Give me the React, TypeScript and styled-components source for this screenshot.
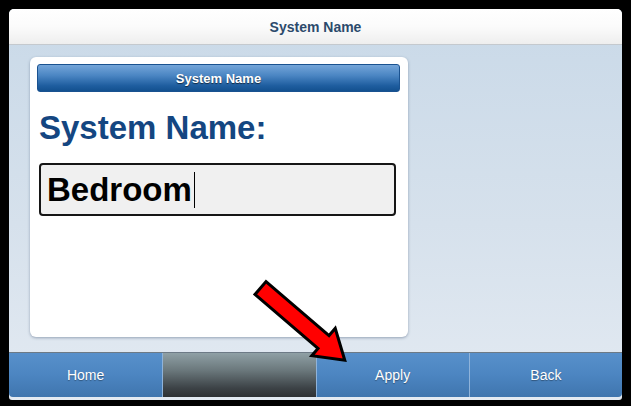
import React from "react";
import styled, { createGlobalStyle } from "styled-components";

const Global = createGlobalStyle`
  html, body { margin: 0; padding: 0; background: #000; }
  body { width: 631px; height: 406px; overflow: hidden; font-family: "Liberation Sans", Arial, sans-serif; }
`;

const Frame = styled.div`
  position: relative;
  width: 631px;
  height: 406px;
  background: #000;
  padding: 9px 9px 6px 9px;
  box-sizing: border-box;
`;

const Screen = styled.div`
  width: 613px;
  height: 391px;
  display: flex;
  flex-direction: column;
  border-radius: 5px 5px 3px 3px;
  overflow: hidden;
  background: linear-gradient(to bottom, #c9d9e8 0%, #d6e1ec 55%, #e3eaf2 100%);
`;

const Header = styled.div`
  height: 35px;
  flex: none;
  display: flex;
  align-items: center;
  justify-content: center;
  background: linear-gradient(to bottom, #ffffff 0%, #fbfbfb 50%, #eeeeee 100%);
  border-bottom: 1px solid #c4c9ce;
  color: #2c4a6c;
  font-weight: bold;
  font-size: 14px;
`;

const Content = styled.div`
  flex: 1;
  padding: 12px 0 15px 21px;
  display: flex;
`;

const Card = styled.div`
  width: 378px;
  height: 280px;
  box-sizing: border-box;
  background: #fff;
  border-radius: 6px;
  box-shadow: 0 1px 3px rgba(60, 80, 110, 0.45);
  padding: 7px 8px 0 7px;
  display: flex;
  flex-direction: column;
`;

const TitleBar = styled.div`
  height: 28px;
  box-sizing: border-box;
  border-radius: 3px;
  border: 1px solid #1a5290;
  background: linear-gradient(to bottom, #74a5d9 0%, #4b86c3 40%, #1e5d9f 80%, #13508f 100%);
  color: #fff;
  font-weight: bold;
  font-size: 13px;
  text-shadow: 0 1px 1px rgba(0, 0, 0, 0.6);
  display: flex;
  align-items: center;
  justify-content: center;
`;

const Heading = styled.div`
  margin: 20px 0 0 2px;
  font-size: 33px;
  line-height: 32px;
  font-weight: bold;
  color: #144681;
`;

const InputBox = styled.div`
  margin: 19px 0 0 2px;
  width: 357px;
  height: 53px;
  box-sizing: border-box;
  border: 2px solid #161616;
  border-radius: 4px;
  background: #f0f0f0;
  display: flex;
  align-items: center;
  padding-left: 6px;
  font-size: 33px;
  font-weight: bold;
  color: #000;
`;

const Caret = styled.span`
  display: inline-block;
  width: 1px;
  height: 36px;
  background: #000;
  margin-left: 2px;
`;

const Footer = styled.div`
  height: 45px;
  flex: none;
  display: grid;
  grid-template-columns: repeat(4, 1fr);
  border-top: 1px solid #6d7a86;
  border-radius: 0 0 4px 4px;
  overflow: hidden;
  margin-bottom: 3px;
  box-sizing: border-box;
`;

const FootButton = styled.div<{ $dark?: boolean; $first?: boolean }>`
  display: flex;
  align-items: center;
  justify-content: center;
  color: #fff;
  font-size: 14px;
  text-shadow: 0 1px 1px rgba(0, 0, 0, 0.35);
  border-left: ${(p) => (p.$first ? "none" : "1px solid #8fb3da")};
  background: ${(p) =>
    p.$dark
      ? "linear-gradient(to bottom, #8fa0a5 0%, #6a777b 40%, #3c4246 80%, #2e3134 100%)"
      : "linear-gradient(to bottom, #5890cb 0%, #4c85c1 50%, #3f75ae 100%)"};
`;

const ArrowLayer = styled.svg`
  position: absolute;
  left: 0;
  top: 0;
  width: 631px;
  height: 406px;
  pointer-events: none;
`;

export default function App() {
  return (
    <>
      <Global />
      <Frame>
        <Screen>
          <Header>System Name</Header>
          <Content>
            <Card>
              <TitleBar>System Name</TitleBar>
              <Heading>System Name:</Heading>
              <InputBox>
                Bedroom
                <Caret />
              </InputBox>
            </Card>
          </Content>
          <Footer>
            <FootButton $first>Home</FootButton>
            <FootButton $dark />
            <FootButton>Apply</FootButton>
            <FootButton>Back</FootButton>
          </Footer>
        </Screen>
        <ArrowLayer viewBox="0 0 631 406">
          <polygon
            points="0,-8.5 83,-8.5 83,-18 111,0 83,18 83,8.5 0,8.5"
            transform="translate(260.5 288) rotate(40.6)"
            fill="#ff0000"
            stroke="#000"
            strokeWidth="3"
            strokeLinejoin="miter"
          />
        </ArrowLayer>
      </Frame>
    </>
  );
}
